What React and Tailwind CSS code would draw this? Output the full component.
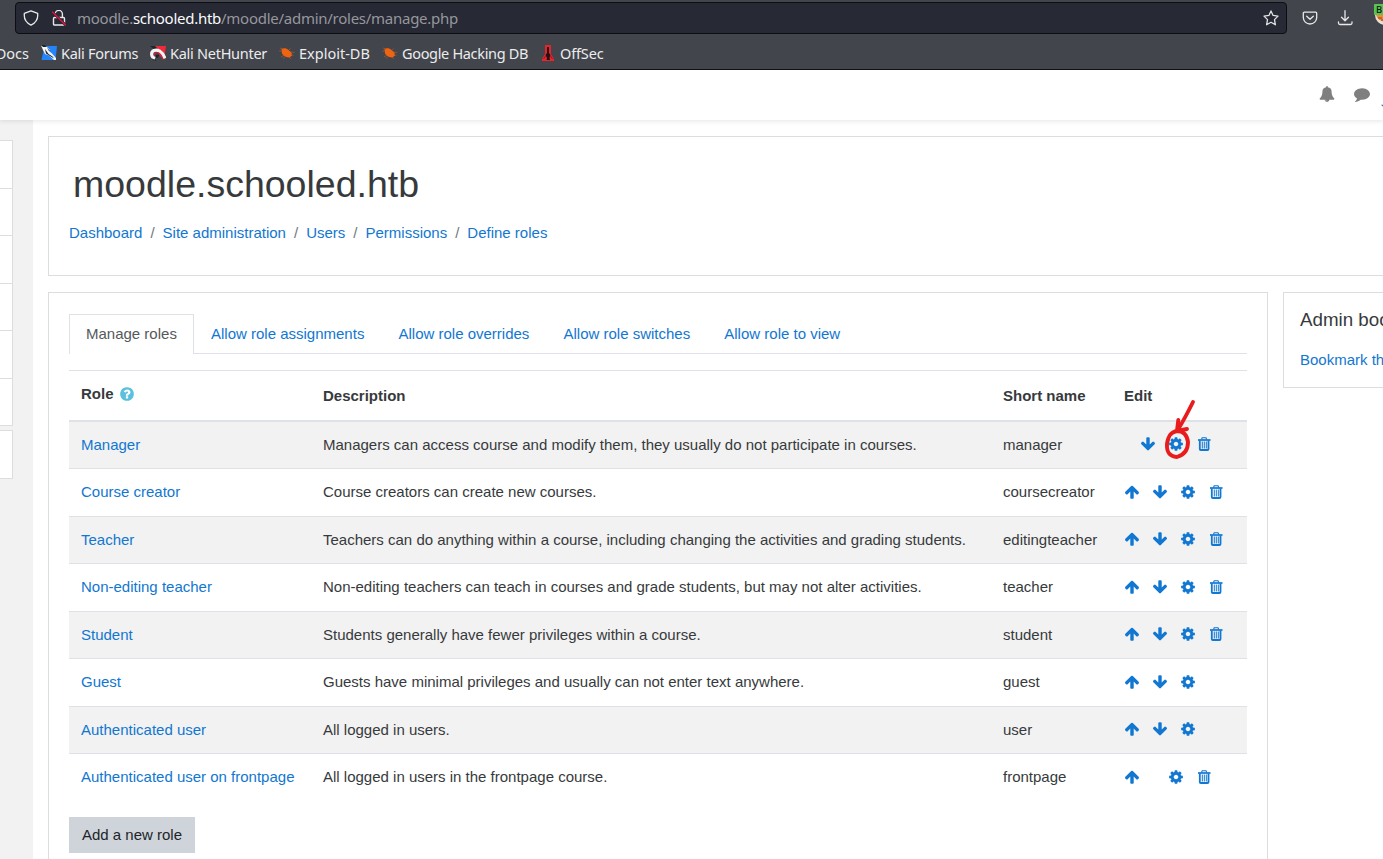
import React from "react";

const ICONS = {
  cog: "M1152 896q0-106-75-181t-181-75-181 75-75 181 75 181 181 75 181-75 75-181zm512-109v222q0 12-8 23t-20 13l-185 28q-19 54-39 91 35 50 107 138 10 12 10 25t-9 23q-27 37-99 108t-94 71q-12 0-26-9l-138-108q-44 23-91 38-16 136-29 186-7 28-36 28h-222q-14 0-24.5-8.5t-11.5-21.5l-28-184q-49-16-90-37l-141 107q-10 9-25 9-14 0-25-11-126-114-165-168-7-10-7-23 0-12 8-23 15-21 51-66.5t54-70.5q-27-50-41-99l-183-27q-13-2-21-12.5t-8-23.5v-222q0-12 8-23t19-13l186-28q14-46 39-92-40-57-107-138-10-12-10-24 0-10 9-23 26-36 98.5-107.5t94.5-71.5q13 0 26 10l138 107q44-23 91-38 16-136 29-186 7-28 36-28h222q14 0 24.5 8.5t11.5 21.5l28 184q49 16 90 37l142-107q9-9 24-9 13 0 25 10 129 119 165 170 7 8 7 22 0 12-8 23-15 21-51 66.5t-54 70.5q26 50 41 98l183 28q13 2 21 12.5t8 23.5z",
  up: "M1675 971q0 51-37 90l-75 75q-38 38-91 38-54 0-90-38l-294-293v704q0 52-37.5 84.5t-90.5 32.5h-128q-53 0-90.5-32.5t-37.5-84.5v-704l-294 293q-36 38-90 38t-90-38l-75-75q-38-38-38-90 0-53 38-91l651-651q35-37 90-37 54 0 91 37l651 651q37 39 37 91z",
  down: "M1675 832q0 53-37 90l-651 652q-39 37-91 37-53 0-90-37l-651-652q-38-36-38-90 0-53 38-91l74-75q39-37 91-37 53 0 90 37l294 294v-704q0-52 38-90t90-38h128q52 0 90 38t38 90v704l294-294q37-37 90-37 52 0 91 37l75 75q37 39 37 91z",
  question: "M1024 1376v-192q0-14-9-23t-23-9h-192q-14 0-23 9t-9 23v192q0 14 9 23t23 9h192q14 0 23-9t9-23zm256-672q0-88-55.5-163t-138.5-116-170-41q-243 0-371 213-15 24 8 42l132 100q7 6 19 6 16 0 25-12 53-68 86-92 34-24 86-24 48 0 85.5 26t37.5 59q0 38-20 61t-68 45q-63 28-115.5 86.5t-52.5 125.5v36q0 14 9 23t23 9h192q14 0 23-9t9-23q0-19 21.5-49.5t54.5-49.5q32-18 49-28.5t46-35 44.5-48 28-60.5 12.5-81zm384 192q0 209-103 385.5t-279.5 279.5-385.5 103-385.5-103-279.5-279.5-103-385.5 103-385.5 279.5-279.5 385.5-103 385.5 103 279.5 279.5 103 385.5z",
  comment: "M1792 896q0 174-120 321.5t-326 233-450 85.5q-70 0-145-8-198 175-460 242-49 14-114 22-17 2-30.5-9t-17.5-29v-1q-3-4-.5-12t2-10 4.5-9.5l6-9 7-8.5 8-9q7-8 31-34.5t34.5-38 31-39.5 32.5-51 27-59 26-76q-157-89-247.5-220t-90.5-281q0-130 71-248.5t191-204.5 286-136.5 348-50.5q244 0 450 85.5t326 233 120 321.5z",
  bell: "M912 1696q0-16-16-16-59 0-101.5-42.5t-42.5-101.5q0-16-16-16t-16 16q0 73 51.5 124.5t124.5 51.5q16 0 16-16zm816-288q0 52-38 90t-90 38h-448q0 106-75 181t-181 75-181-75-75-181h-448q-52 0-90-38t-38-90q50-42 91-88t85-119.5 74.5-158.5 50-206 19.5-260q0-152 117-282.5t307-158.5q-8-19-8-39 0-40 28-68t68-28 68 28 28 68q0 20-8 39 190 28 307 158.5t117 282.5q0 139 19.5 260t50 206 74.5 158.5 85 119.5 91 88z",
};

function Icon({ name, className = "size-4" }) {
  return (
    <svg viewBox="0 0 1792 1792" fill="currentColor" className={`block shrink-0 ${className}`}>
      <path d={ICONS[name]} />
    </svg>
  );
}

function TrashIcon() {
  return (
    <svg viewBox="0 0 16 16" className="block size-4 shrink-0" fill="none" stroke="currentColor">
      <path d="M5.500 3.500L6.200 1.700h3.800l.8 1.800" strokeWidth="1.100" />
      <path d="M2 4h12.500" strokeWidth="1.700" />
      <path d="M3.800 4.500V13q0 1 1 1h6.700q1 0 1-1V4.500" strokeWidth="1.800" />
      <path d="M6.300 5.500V12.500M8.300 5.500V12.500M10.300 5.500V12.500" strokeWidth="1" />
    </svg>
  );
}

const ROLES = [
  ["Manager", "Managers can access course and modify them, they usually do not participate in courses.", "manager", ["", "down", "cog", "trash"]],
  ["Course creator", "Course creators can create new courses.", "coursecreator", ["up", "down", "cog", "trash"]],
  ["Teacher", "Teachers can do anything within a course, including changing the activities and grading students.", "editingteacher", ["up", "down", "cog", "trash"]],
  ["Non-editing teacher", "Non-editing teachers can teach in courses and grade students, but may not alter activities.", "teacher", ["up", "down", "cog", "trash"]],
  ["Student", "Students generally have fewer privileges within a course.", "student", ["up", "down", "cog", "trash"]],
  ["Guest", "Guests have minimal privileges and usually can not enter text anywhere.", "guest", ["up", "down", "cog"]],
  ["Authenticated user", "All logged in users.", "user", ["up", "down", "cog"]],
  ["Authenticated user on frontpage", "All logged in users in the frontpage course.", "frontpage", ["up", "", "cog", "trash"]],
];

const CRUMBS = ["Dashboard", "Site administration", "Users", "Permissions", "Define roles"];
const TABS = ["Allow role assignments", "Allow role overrides", "Allow role switches", "Allow role to view"];

function ForumsIcon() {
  return (
    <svg viewBox="0 0 16 16" className="size-4 shrink-0">
      <path d="M4 1h12l-1.500 14H0.500L2 8z" fill="#2484fa" />
      <path d="M0 .5l5 .5 4 4-1 1 3 2.500L15 13v2h-2L8 10.500 4 9 2 5z" fill="#f4f5f6" />
      <path d="M0 0h4l2 2-4 0zM4 4l3.500 5 4 2.500 1.500 2-4-2.500-4-2.500zM6 2.500l3 3.500-1 0z" fill="#1d222b" />
    </svg>
  );
}

function NetHunterIcon() {
  return (
    <svg viewBox="0 0 16 16" className="size-4 shrink-0">
      <path d="M4 1h12l-2 13-4-3z" fill="#ee2b3a" />
      <path d="M0 1l5 0 3 3-3 1z" fill="#22242a" />
      <path d="M5 13.500C1 12 .5 7 4 5.500S12 6 15 13.500" fill="none" stroke="#f4f4f5" strokeWidth="3.200" />
      <path d="M4.500 11C3 8 7 6.500 9.500 8.500S12 12 13 14.500" fill="none" stroke="#d51f42" strokeWidth="1.100" />
      <path d="M6 10.500l3-.5-2 3zM2 14l4 1.500" fill="#1f2025" stroke="#1f2025" strokeWidth=".8" />
    </svg>
  );
}

function ExploitIcon() {
  return (
    <svg viewBox="0 0 16 16" className="size-4 shrink-0">
      <path d="M2.500 4c2-1.200 5-1 7 1l3 2.500.5 3-2.500 2c-3 0-6-1.500-7.500-4z" fill="#f0640f" />
      <path d="M4 4L1 3M3 6H0M5 10l-3 2M7 11l-3 2.500M10 5l1.500-1.500M11.500 7l4 .5M12 9.500l2.500 1M10 12l2 2" stroke="#a85a30" strokeWidth="0.700" />
    </svg>
  );
}

function OffSecIcon() {
  return (
    <svg viewBox="0 0 16 16" className="size-4 shrink-0">
      <path d="M5 0h6v9l3 5v2H2v-2l3-5z" fill="#e5252b" />
      <path d="M7 2h2v6l1.500 2-1 3 .500 2H6.500l.500-2-1.500-3L7 8z" fill="#251015" />
      <path d="M5.500 11l-2 3M10.500 11l2 3" stroke="#a3151b" strokeWidth="1" />
    </svg>
  );
}

function BrowserChrome() {
  return (
    <header className="flex h-[70px] w-full shrink-0 flex-col border-b border-[#101116] bg-[#42454c] font-['Noto_Sans','Open_Sans',sans-serif] text-[#ececed]">
      <div className="flex h-[34px] shrink-0 items-end">
        <div className="ml-[15px] flex h-8 w-[1272px] shrink-0 items-center rounded-[4px] border border-[#0d0e13] bg-[#272934] pr-[7px] pl-[7px]">
          <svg viewBox="0 0 16 16" className="size-4 shrink-0" fill="none" stroke="#e9e9eb" strokeWidth="1.3" strokeLinejoin="round">
            <path d="M8 .8l6.700 2.600v2.400c0 4-2.400 7.200-6.700 9.400C3.700 13 1.300 9.800 1.300 5.800V3.400z" />
          </svg>
          <svg viewBox="0 0 16 16" className="ml-3 size-4 shrink-0" fill="none" stroke="#e8e8e8" strokeWidth="1.4" strokeLinecap="round">
            <path d="M4.200 5V4a3.600 3.600 0 0 1 7.200 0v3.500M3.500 7.500h9a1 1 0 0 1 1 1v5.500a1 1 0 0 1-1 1h-9a1 1 0 0 1-1-1V8.500a1 1 0 0 1 1-1z" />
            <path d="M1.500 2l13 13" stroke="#272934" strokeWidth="2.500" />
            <path d="M1.500 2l13 13" stroke="#e4113c" strokeWidth="1.400" />
          </svg>
          <div className="ml-[10px] text-[15px] leading-5 tracking-[-0.265px] whitespace-nowrap text-[#96979d]">
            moodle.<span className="text-[#fbfbfe]">schooled.htb</span>/moodle/admin/roles/manage.php
          </div>
          <svg viewBox="0 0 16 16" className="ml-auto size-4 shrink-0" fill="none" stroke="#e4e4e6" strokeWidth="1.300" strokeLinejoin="round">
            <path d="M8 .9l2.100 4.500 4.900.700-3.500 3.500.900 5.200L8 12.300l-4.400 2.500.900-5.200L1 6.100l4.900-.700z" />
          </svg>
        </div>
        <div className="flex h-8 flex-1 items-center overflow-hidden pl-[15px]">
          <svg viewBox="0 0 16 16" className="size-4 shrink-0" fill="none" stroke="#e9e9ea" strokeWidth="1.300" strokeLinecap="round" strokeLinejoin="round">
            <path d="M2.300 2.200h11.400a1 1 0 0 1 1 1V7.500a6.700 6.500 0 0 1-13.400 0V3.200a1 1 0 0 1 1-1z" />
            <path d="M4.700 6.200L8 9.300l3.300-3.100" />
          </svg>
          <svg viewBox="0 0 16 16" className="ml-[19px] size-4 shrink-0" fill="none" stroke="#e9e9ea" strokeWidth="1.300" strokeLinecap="round" strokeLinejoin="round">
            <path d="M8 .700v9.500M4.500 7.200L8 10.700l3.500-3.500M1.500 12v1a1.500 1.500 0 0 0 1.500 1.500h10.500a1.500 1.500 0 0 0 1.500-1.500v-1" />
          </svg>
          <div className="relative ml-5 h-6 w-6 shrink-0">
            <svg viewBox="0 0 24 24" className="size-6">
              <circle cx="12" cy="9" r="10" fill="#e9e0d8" />
              <path d="M3 9h18c-1 9-15 9-18 0z" fill="#ef8a31" />
              <path d="M5 12h4M8 14h4" stroke="#8d4a20" />
            </svg>
            <span className="absolute top-[-2px] left-[1px] flex h-[11px] w-4 items-center rounded-[1px] bg-[#57c452] pl-[2px] text-[9.500px] leading-none font-medium text-[#111]">B</span>
          </div>
        </div>
      </div>
      <nav className="flex h-[35px] items-center overflow-hidden pt-[3px] text-[14.500px] leading-5 whitespace-nowrap">
        <span className="flex w-[41px] shrink-0 justify-end pr-[12px]">Docs</span>
        <span className="flex w-[109px] shrink-0 items-center gap-1 tracking-[-0.270px]"><ForumsIcon />Kali Forums</span>
        <span className="flex w-[129px] shrink-0 items-center gap-1 tracking-[-0.270px]"><NetHunterIcon />Kali NetHunter</span>
        <span className="flex w-[103px] shrink-0 items-center gap-1"><ExploitIcon />Exploit-DB</span>
        <span className="flex w-[158px] shrink-0 items-center gap-1 tracking-[-0.330px]"><ExploitIcon />Google Hacking DB</span>
        <span className="flex shrink-0 items-center gap-1 tracking-[-0.150px]"><OffSecIcon />OffSec</span>
      </nav>
    </header>
  );
}

function RolesTable() {
  return (
    <table className="mt-4 w-full table-fixed border-collapse text-left">
      <colgroup>
        <col className="w-[242px]" />
        <col className="w-[680px]" />
        <col className="w-[121px]" />
        <col />
      </colgroup>
      <thead>
        <tr className="h-[50px] border-t border-b-2 border-[#dee2e6]">
          <th className="px-3 pb-0.5 font-bold">
            <span className="flex items-center">
              Role
              <Icon name="question" className="ml-[5px] size-4 text-[#5bc0de]" />
            </span>
          </th>
          <th className="px-3 pt-0.5 font-bold">Description</th>
          <th className="px-3 pt-0.5 font-bold">Short name</th>
          <th className="px-3 pt-0.5 font-bold">Edit</th>
        </tr>
      </thead>
      <tbody>
        {ROLES.map(([role, description, shortName, actions], i) => (
          <tr key={shortName} className="border-[#dee2e6] not-first:border-t odd:bg-[#f2f2f2]">
            <td className="p-3 whitespace-nowrap text-[#1177d1]">{role}</td>
            <td className="p-3 whitespace-nowrap">{description}</td>
            <td className="p-3 whitespace-nowrap">{shortName}</td>
            <td className="p-3 text-[#1177d1]">
              <div className="relative flex h-[22.5px] items-center pb-[1.500px]">
                {actions.map((a, n) =>
                  a ? (
                    <span key={n} className="mr-3">{a === "trash" ? <TrashIcon /> : <Icon name={a} />}</span>
                  ) : (
                    <span key={n} className="w-4" />
                  )
                )}
                {i === 0 && (
                  <svg viewBox="0 0 40 66" className="absolute top-[-38px] left-[36px] h-[66px] w-10" fill="none" stroke="#e81c1c" strokeWidth="3.900" strokeLinecap="round" strokeLinejoin="round">
                    <path d="M33 6C28 16 24 24 18 33.500M18.300 24L17 35L27 33" />
                    <path d="M17 35C10 36 8 41 7 48C6.500 56 9 60 17 61C24 59 28 54 28 46C27 39 23 35 17 35" />
                  </svg>
                )}
              </div>
            </td>
          </tr>
        ))}
      </tbody>
    </table>
  );
}

export default function App() {
  return (
    <div className="flex h-[859px] w-[1383px] flex-col overflow-hidden bg-white font-['Liberation_Sans',Arial,sans-serif] text-[15px] leading-[22.5px] text-[#373a3c]">
      <BrowserChrome />
      <div className="relative z-10 flex h-[50px] shrink-0 items-center justify-end bg-white pb-[2px] text-[#7f7f7f] shadow-[0_2px_4px_rgba(0,0,0,0.08)]">
        <Icon name="bell" className="size-4" />
        <Icon name="comment" className="ml-[19px] size-4" />
        <svg viewBox="0 0 3 4" className="mt-6 ml-[11px] h-1 w-[2px]"><path d="M0 0h3v3z" fill="#1177d1" /></svg>
      </div>
      <div className="flex min-h-0 flex-1">
        <aside className="w-[33px] shrink-0 bg-[#f2f2f2] pt-5">
          <div className="h-[286px] w-[13px] border-y border-r border-[#dcdddf] bg-white">
            <div className="h-12 border-b border-[#dcdddf]" />
            <div className="h-[47px] border-b border-[#dcdddf]" />
            <div className="h-12 border-b border-[#dcdddf]" />
            <div className="h-[47px] border-b border-[#dcdddf]" />
            <div className="h-12 border-b border-[#dcdddf]" />
          </div>
          <div className="mt-1 h-[49px] w-[13px] border-y border-r border-[#dcdddf] bg-white" />
        </aside>
        <main className="flex min-w-0 flex-1 flex-col overflow-hidden pt-4 pl-[15px]">
          <section className="h-[140px] shrink-0 border-y border-l border-[#dcdddf] pt-[25px] pl-5">
            <h1 className="pl-1 text-[37.500px] leading-[45px]">moodle.schooled.htb</h1>
            <nav className="mt-[15px] flex whitespace-nowrap text-[#1177d1]">
              {CRUMBS.map((c, i) => (
                <span key={c} className="flex">
                  {i > 0 && <span className="px-2 text-[#6f777e]">/</span>}
                  {c}
                </span>
              ))}
            </nav>
          </section>
          <div className="mt-4 flex min-h-0 flex-1">
            <section className="w-[1220px] shrink-0 overflow-hidden border-x border-t border-[#dcdddf] px-5 pt-[21px]">
              <div className="flex h-10 border-b border-[#dee2e6] whitespace-nowrap text-[#1177d1]">
                <span className="mr-[0.300px] h-10 border border-b-0 border-[#dee2e6] bg-white px-4 pt-2 text-[#55595c]">Manage roles</span>
                {TABS.map((t) => (
                  <span key={t} className="mr-[1px] ml-[0.500px] px-[16.300px] pt-[9px]">{t}</span>
                ))}
              </div>
              <RolesTable />
              <button className="mt-4 block h-9 w-[126px] bg-[#ced4da] pt-px text-[#212529]">Add a new role</button>
            </section>
            <aside className="ml-[15px] h-24 w-[240px] shrink-0 border border-[#dcdddf] px-4 pt-4 whitespace-nowrap">
              <h5 className="text-[18.750px] leading-[22.500px]">Admin bookmarks</h5>
              <div className="mt-[17px] text-[#1177d1]">Bookmark this page</div>
            </aside>
          </div>
        </main>
      </div>
    </div>
  );
}
